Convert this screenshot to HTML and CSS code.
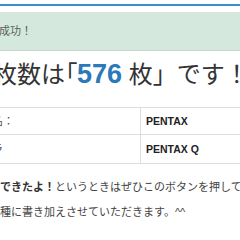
FILE: index.html
```html
<!DOCTYPE html>
<html lang="ja">
<head>
  <meta charset="UTF-8">
  <title>登録枚数</title>
  <link rel="stylesheet" href="styles.css">
</head>
<body>
  <div class="header"></div>
  <div class="page">
    <div class="alert">写真登録成功！</div>
    <h1 class="count">登録枚数は<span class="bracket">「</span><strong>576</strong> 枚」です！</h1>
    <table class="info">
      <tr>
        <td class="label">メーカー名：</td>
        <td class="value">PENTAX</td>
      </tr>
      <tr class="tall">
        <td class="label">使用カメラ</td>
        <td class="value">PENTAX Q</td>
      </tr>
    </table>
    <p class="note"><b>全部撮影できたよ！</b>というときはぜひこのボタンを押してください。</p>
    <p class="note second">一覧の機種に書き加えさせていただきます。^^</p>
  </div>
</body>
</html>
```

FILE: styles.css
```css
body {
  margin: 0;
  background: #fff;
  font-family: 'Liberation Sans', 'Noto Sans CJK JP', sans-serif;
  color: #444;
  overflow: hidden;
}
.header {
  height: 4px;
  border-bottom: 2px solid #3b8ec9;
}
.page {
  margin-left: -60px;
  width: 420px;
}
.alert {
  margin-top: 6px;
  padding: 12px 15px;
  font-size: 11px;
  line-height: 14px;
  color: #5a5f5c;
  background: #d5e8de;
  border-bottom: 1px solid #c6d8ce;
}
.count {
  margin: 7px 0 0;
  padding-left: 5px;
  font-size: 24px;
  line-height: 32px;
  font-weight: normal;
  color: #333;
  white-space: nowrap;
}
.count .bracket {
  font-feature-settings: "palt";
}
.count strong {
  font-size: 27px;
  color: #2a79b8;
}
.info {
  margin-top: 16px;
  border-collapse: collapse;
  width: 420px;
  font-size: 11px;
}
.info td {
  border-top: 1px solid #ddd;
  border-bottom: 1px solid #ddd;
  padding-top: 6px;
  padding-bottom: 6px;
  line-height: 14px;
}
.info .tall td {
  padding-top: 7px;
  padding-bottom: 7px;
}
.info .label {
  width: 191px;
  padding-left: 8px;
  color: #555;
  border-right: 1px solid #ddd;
}
.info .value {
  padding-left: 5px;
  font-size: 10.5px;
  font-weight: bold;
  color: #222;
}
.note {
  margin: 14px 0 0;
  padding-left: 16px;
  font-size: 11px;
  line-height: 18px;
  white-space: nowrap;
}
.note b {
  color: #333;
}
.note.second {
  margin-top: 7px;
}
```
